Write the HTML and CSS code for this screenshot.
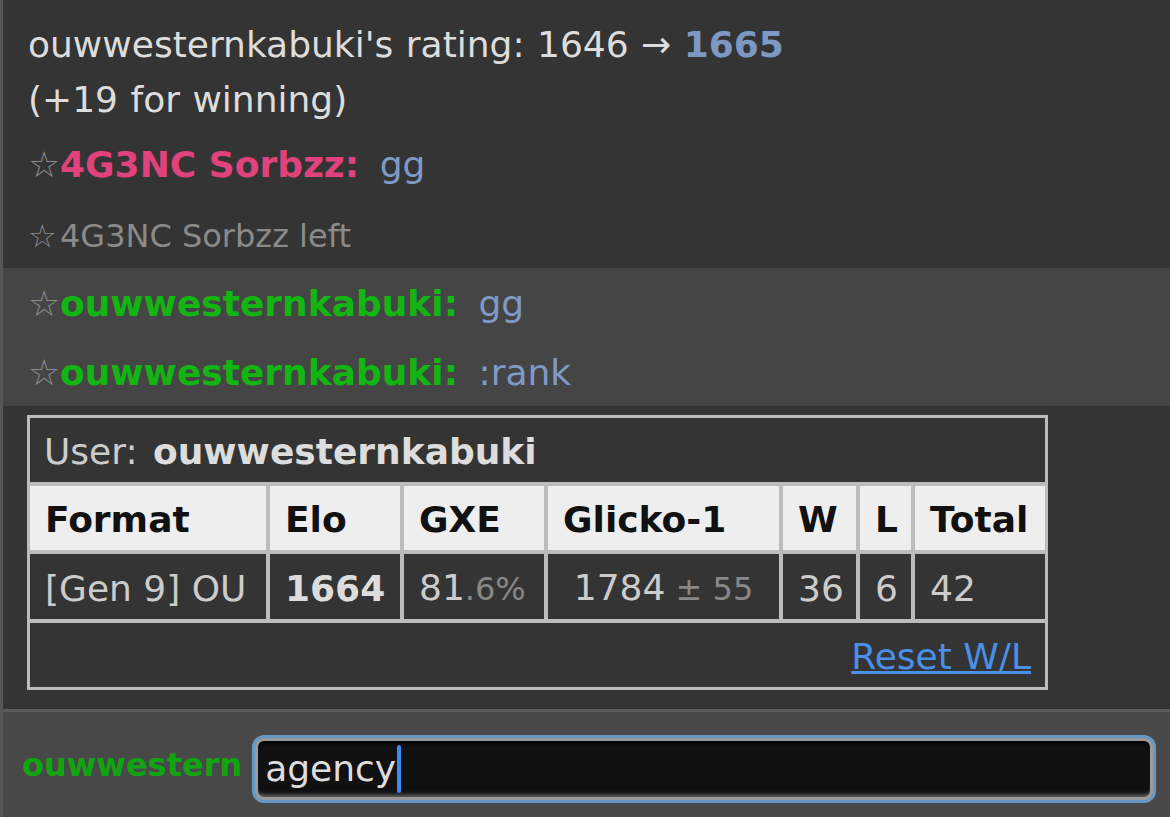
FILE: index.html
```html
<!DOCTYPE html>
<html lang="en">
<head>
  <meta charset="UTF-8">
  <meta name="viewport" content="width=device-width, initial-scale=1.0">
  <title>Battle chat</title>
  <link rel="stylesheet" href="styles.css">
</head>
<body>
  <div class="room">
    <div class="log">
      <div class="rating">ouwwesternkabuki's rating: 1646 &rarr; <strong>1665</strong><br>(+19 for winning)</div>
      <div class="chat"><span class="sym">&#9734;</span><strong class="pink">4G3NC Sorbzz:</strong> <em>gg</em></div>
      <div class="chat notice"><small><span class="sym">&#9734;</span>4G3NC Sorbzz left</small></div>
      <div class="mine">
        <div class="chat"><span class="sym">&#9734;</span><strong class="green">ouwwesternkabuki:</strong> <em>gg</em></div>
        <div class="chat"><span class="sym">&#9734;</span><strong class="green">ouwwesternkabuki:</strong> <em>:rank</em></div>
      </div>
      <table class="rank">
        <colgroup>
          <col class="c-format"><col class="c-elo"><col class="c-gxe"><col class="c-glicko"><col class="c-w"><col class="c-l"><col class="c-total">
        </colgroup>
        <tr><td colspan="7" class="user">User: <strong>ouwwesternkabuki</strong></td></tr>
        <tr>
          <th>Format</th><th>Elo</th><th>GXE</th><th>Glicko-1</th><th>W</th><th>L</th><th>Total</th>
        </tr>
        <tr>
          <td>[Gen 9] OU</td>
          <td><strong>1664</strong></td>
          <td>81<small>.6%</small></td>
          <td class="glicko">1784<small> &plusmn; 55</small></td>
          <td>36</td>
          <td>6</td>
          <td>42</td>
        </tr>
        <tr><td colspan="7" class="reset"><a href="#">Reset W/L</a></td></tr>
      </table>
    </div>
    <div class="compose">
      <strong class="label">ouwwestern</strong>
      <div class="input">agency<span class="caret"></span></div>
    </div>
  </div>
</body>
</html>
```

FILE: styles.css
```css
body { margin: 0; background: #343434; font-family: "DejaVu Sans", Verdana, sans-serif; font-size: 36px; color: #ddd; }
.room { border-left: 3px solid #565656; height: 817px; display: flex; flex-direction: column; box-sizing: border-box; overflow: hidden; }
.log { flex: 1; }

.rating { padding: 17px 0 4px 25px; line-height: 55px; color: #ddd; word-spacing: 1px; }
.rating strong { color: #7c98c3; }

.chat { padding: 9px 0 9px 25px; line-height: 50px; white-space: nowrap; }
.chat em { font-style: normal; color: #7e9bc6; padding-left: 9px; }
.sym { display: inline-block; width: 32px; color: #8a8a8a; }
.pink { color: #e0437b; }
.green { color: #12b512; }
.notice { padding: 11px 0 7px 25px; }
.notice small { font-size: 32px; color: #8a8a8a; }
.mine { background: #454545; }
.mine .chat { padding: 11px 0 8px 25px; }

.rank { margin: 9px 0 0 24px; width: 1021px; table-layout: fixed; border-collapse: separate; border-spacing: 0; border: 3px solid #bcbcbc; color: #ccc; }
.rank td, .rank th { padding: 4px 15px 0; line-height: 60px; text-align: left; white-space: nowrap; overflow: hidden; }
.rank td + td, .rank th + th { border-left: 4px solid #bcbcbc; }
.rank tr + tr > * { border-top: 4px solid #bcbcbc; }
.rank th { background: #eee; color: #111; font-weight: bold; }
.rank strong { color: #ddd; }
.rank small { font-size: 32px; color: #888; }
.rank .user { padding-left: 14px; word-spacing: 4px; }
.rank .glicko { text-align: center; }
.rank .reset { text-align: right; padding-right: 14px; }
.rank .reset a { color: #4a8fe8; }
.c-format { width: 236px; }
.c-elo { width: 134px; }
.c-gxe { width: 144px; }
.c-glicko { width: 235px; }
.c-w { width: 77px; }
.c-l { width: 55px; }
.c-total { width: 134px; }

.compose { border-top: 3px solid #5b5b5b; background: #484848; height: 108px; box-sizing: border-box; padding: 26px 17px 17px 19px; display: flex; align-items: center; }
.label { font-size: 32px; color: #10a510; margin: 0 13px 8px 0; }
.input { flex: 1; height: 62px; box-sizing: border-box; border: 3px solid #9a9a9a; border-radius: 9px; background: #111; box-shadow: 0 0 0 3px #6699c6, inset 0 -4px 4px -2px #6a6a6a, inset 0 3px 4px #000; padding: 0 7px; line-height: 56px; color: #ddd; display: flex; align-items: center; }
.caret { display: inline-block; width: 4px; height: 48px; margin-left: 1px; border-radius: 2px; background: #3d8af5; }
```
